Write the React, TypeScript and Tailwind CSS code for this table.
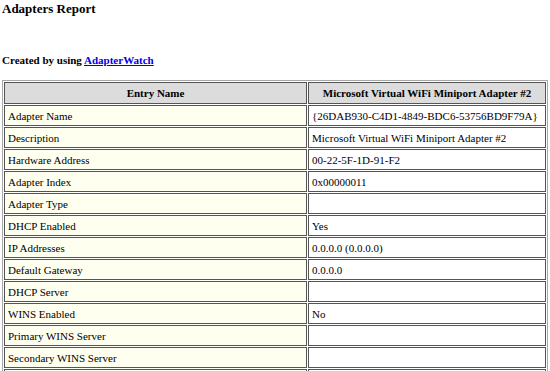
const rows: [string, string][] = [
  ['Adapter Name', '{26DAB930-C4D1-4849-BDC6-53756BD9F79A}'],
  ['Description', 'Microsoft Virtual WiFi Miniport Adapter #2'],
  ['Hardware Address', '00-22-5F-1D-91-F2'],
  ['Adapter Index', '0x00000011'],
  ['Adapter Type', ''],
  ['DHCP Enabled', 'Yes'],
  ['IP Addresses', '0.0.0.0 (0.0.0.0)'],
  ['Default Gateway', '0.0.0.0'],
  ['DHCP Server', ''],
  ['WINS Enabled', 'No'],
  ['Primary WINS Server', ''],
  ['Secondary WINS Server', ''],
  ['', ''],
];

export default function App() {
  return (
    <div className="h-[371px] w-[550px] overflow-hidden bg-white text-black font-[family-name:Liberation_Serif,serif]">
      <h4 className="pl-[2px] pt-[1px] text-[13px] font-bold leading-[15px]">Adapters Report</h4>
      <p className="mt-[38px] pl-[2px] text-[11px] font-bold leading-[13px]">
        Created by using{' '}
        <a href="#" className="text-[#0000ee] underline">
          AdapterWatch
        </a>
      </p>
      <table className="ml-[2px] mt-[13px] w-[546px] border border-[#a8a8a8] border-separate border-spacing-[1px] text-[11px] leading-[12px]">
        <thead>
          <tr>
            <th className="h-[22px] w-[303px] border border-[#555] bg-[#dcdcdc] px-[3px] text-center font-bold">
              Entry Name
            </th>
            <th className="h-[22px] border border-[#555] bg-[#dcdcdc] px-[3px] text-center font-bold">
              Microsoft Virtual WiFi Miniport Adapter #2
            </th>
          </tr>
        </thead>
        <tbody>
          {rows.map(([k, v], i) => (
            <tr key={i}>
              <td className="h-[21px] border border-[#555] bg-[#fffff0] px-[3px] align-middle">{k}</td>
              <td className="h-[21px] border border-[#555] bg-white px-[3px] align-middle">{v}</td>
            </tr>
          ))}
        </tbody>
      </table>
    </div>
  );
}
